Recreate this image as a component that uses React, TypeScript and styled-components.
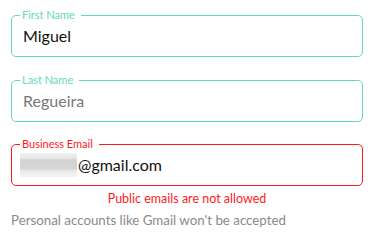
import React from "react";
import styled, { createGlobalStyle } from "styled-components";

const Global = createGlobalStyle`
  html, body { margin: 0; padding: 0; background: #fff; }
  body { font-family: Lato, "Noto Sans", sans-serif; }
`;

const Form = styled.div`
  width: 375px;
  box-sizing: border-box;
  padding: 9px 12px 0 11px;
  display: flex;
  flex-direction: column;
`;

const Field = styled.fieldset<{ $error?: boolean; $gap?: number }>`
  display: block;
  margin: ${(p) => p.$gap ?? 0}px 0 0 0;
  padding: 0 11px 7px 11px;
  min-width: 0;
  border: 1px solid ${(p) => (p.$error ? "#ff1a1a" : "#62d9bd")};
  border-radius: 5px;
`;

const Legend = styled.legend<{ $error?: boolean }>`
  margin-left: -3px;
  padding: 0 6px 0 2px;
  font-size: 11px;
  line-height: 12px;
  height: 12px;
  color: ${(p) => (p.$error ? "#ff1a1a" : "#62d9bd")};
`;

const Value = styled.div<{ $muted?: boolean }>`
  margin-top: 1px;
  height: 27px;
  font-size: 16px;
  line-height: 27px;
  color: ${(p) => (p.$muted ? "#777" : "#111")};
  display: flex;
  align-items: center;
`;

const Blur = styled.span`
  display: inline-block;
  width: 57px;
  height: 24px;
  margin-left: -3px;
  margin-right: 1px;
  background: linear-gradient(
    to bottom,
    #f0f0f0 0%,
    #e8e8e8 20%,
    #d2d2d2 30%,
    #d6d6d6 65%,
    #ebebeb 75%,
    #f6f2f2 100%
  );
  filter: blur(0.6px);
`;

const ErrorText = styled.div`
  margin-top: 4px;
  text-align: center;
  font-size: 12.5px;
  line-height: 18px;
  color: #ff1a1a;
`;

const Helper = styled.div`
  margin-top: 3px;
  font-size: 13.3px;
  line-height: 18px;
  color: #8a8a8a;
`;

export default function App() {
  return (
    <>
      <Global />
      <Form>
        <Field>
          <Legend>First Name</Legend>
          <Value>Miguel</Value>
        </Field>
        <Field $gap={17}>
          <Legend>Last Name</Legend>
          <Value $muted>Regueira</Value>
        </Field>
        <Field $gap={16} $error>
          <Legend $error>Business Email</Legend>
          <Value>
            <Blur />@gmail.com
          </Value>
        </Field>
        <ErrorText>Public emails are not allowed</ErrorText>
        <Helper>Personal accounts like Gmail won't be accepted</Helper>
      </Form>
    </>
  );
}
